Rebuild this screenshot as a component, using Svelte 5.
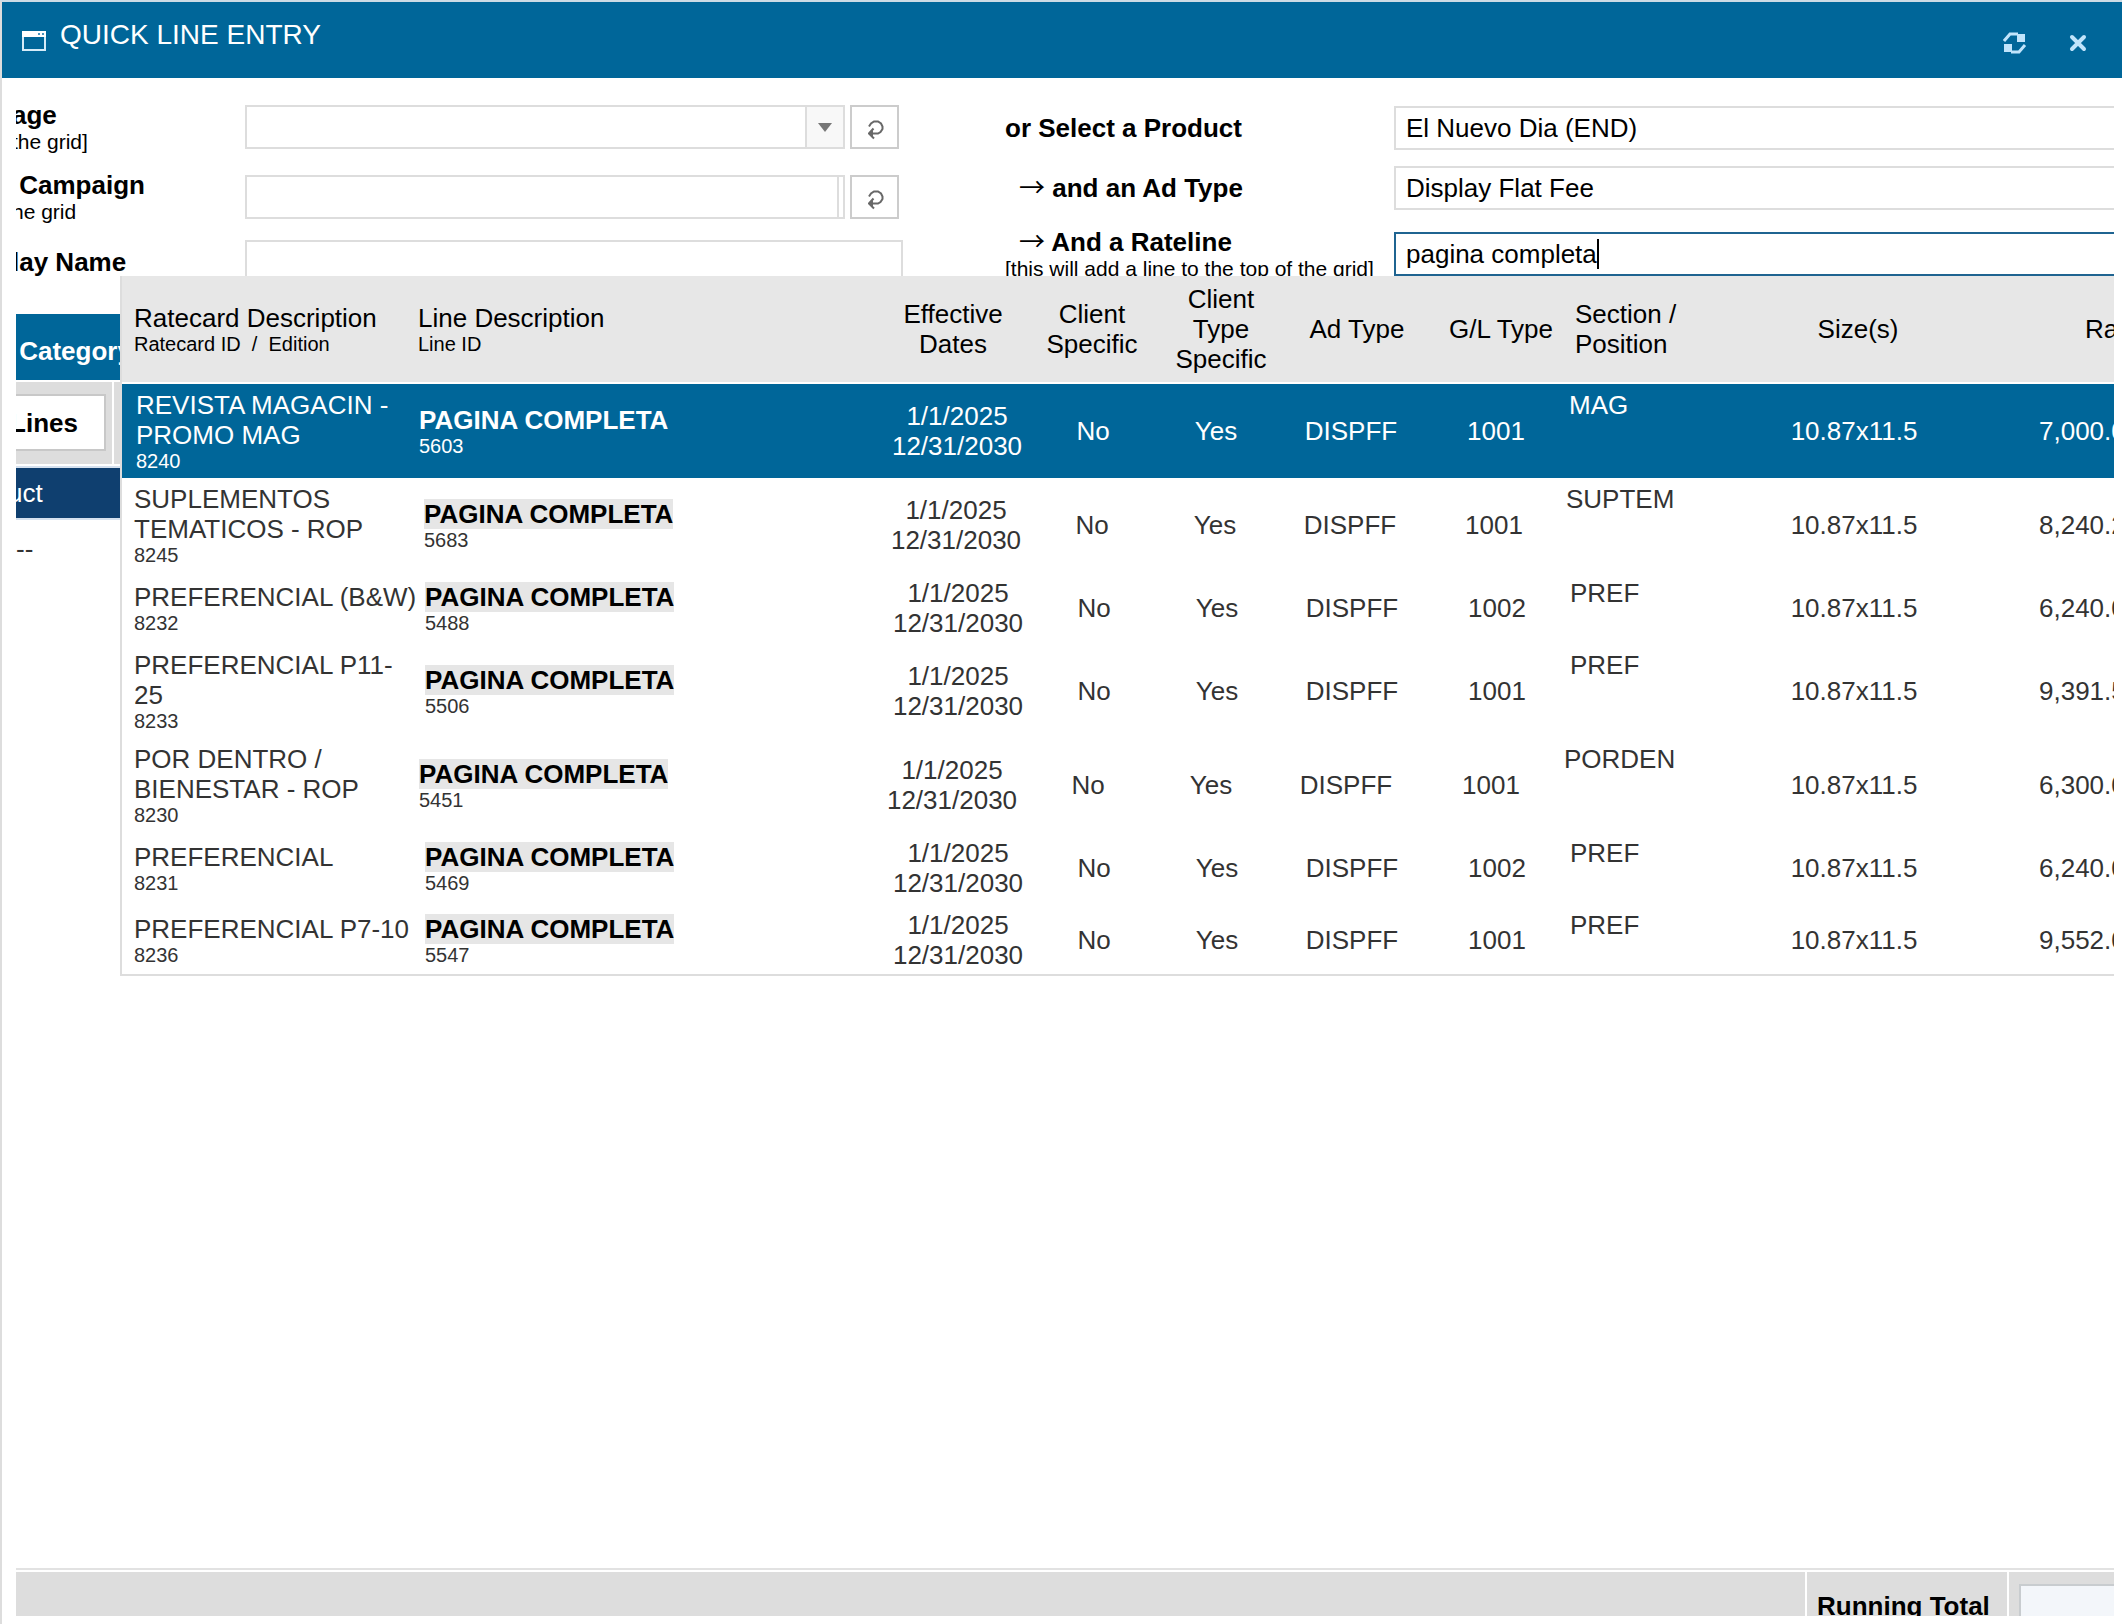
<script>
  const lines = [
    { name: 'REVISTA MAGACIN -\nPROMO MAG', card: '8240', id: '5603', gl: '1001', section: 'MAG', rate: '7,000.00', fit: 'selected' },
    { name: 'SUPLEMENTOS\nTEMATICOS - ROP', card: '8245', id: '5683', gl: '1001', section: 'SUPTEM', rate: '8,240.20', fit: 'snug' },
    { name: 'PREFERENCIAL (B&W)', card: '8232', id: '5488', gl: '1002', section: 'PREF', rate: '6,240.00', fit: '' },
    { name: 'PREFERENCIAL P11-\n25', card: '8233', id: '5506', gl: '1001', section: 'PREF', rate: '9,391.50', fit: '' },
    { name: 'POR DENTRO /\nBIENESTAR - ROP', card: '8230', id: '5451', gl: '1001', section: 'PORDEN', rate: '6,300.00', fit: 'tight' },
    { name: 'PREFERENCIAL', card: '8231', id: '5469', gl: '1002', section: 'PREF', rate: '6,240.00', fit: '' },
    { name: 'PREFERENCIAL P7-10', card: '8236', id: '5547', gl: '1001', section: 'PREF', rate: '9,552.00', fit: '' }
  ];
  let product = $state('El Nuevo Dia (END)');
  let adType = $state('Display Flat Fee');
  let rateline = $state('pagina completa');
</script>

{#snippet resetIcon()}
  <svg width="16" height="20" viewBox="0 0 16 20" fill="none" stroke="#686868" stroke-width="2" aria-hidden="true">
    <path d="M1 6.500L3 3.500L6 1.500H10L13 3.500L14.500 6.500V9L12.500 12L10 13.500H3" />
    <path d="M5.500 8.500L1 13.500L6 18.500" />
    <path d="M1 13.500L5 10.500V16.500Z" fill="#686868" stroke="none" />
  </svg>
{/snippet}

<div class="window">
  <header class="titlebar">
    <svg class="app-icon" width="24" height="20" viewBox="0 0 24 20" aria-hidden="true">
      <rect x="1" y="1" width="22" height="18" fill="none" stroke="#d5ebf8" stroke-width="2" />
      <rect width="24" height="6" fill="#fff" />
      <rect x="16" y="2" width="2" height="2" fill="#4a94bd" />
      <rect x="20" y="2" width="2" height="2" fill="#4a94bd" />
    </svg>
    <h1>QUICK LINE ENTRY</h1>
    <div class="tools">
      <button type="button" aria-label="Refresh">
        <svg width="24" height="22" viewBox="0 0 24 22" aria-hidden="true">
          <path d="M1 9L7 2H15" fill="none" stroke="#c0e4fb" stroke-width="3" />
          <rect x="14" y="2" width="8" height="8" fill="#c0e4fb" />
          <rect x="1" y="12" width="8" height="8" fill="#c0e4fb" />
          <path d="M8 20H16L22 13" fill="none" stroke="#c0e4fb" stroke-width="3" />
        </svg>
      </button>
      <button type="button" aria-label="Close">
        <svg width="18" height="18" viewBox="0 0 18 18" aria-hidden="true">
          <path d="M3 3L15 15M15 3L3 15" fill="none" stroke="#c0e4fb" stroke-width="4" stroke-linecap="round" />
        </svg>
      </button>
    </div>
  </header>

  <main>
    <form class="entry">
      <div class="column left">
        <div class="row">
          <label for="package">age<small>the grid]</small></label>
          <div class="control">
            <div class="box combo">
              <select id="package"><option></option></select>
              <span class="trigger"><svg width="14" height="9" viewBox="0 0 14 9" aria-hidden="true"><path d="M0 0H14L7 9Z" fill="#777" /></svg></span>
            </div>
            <button type="button" class="reset" aria-label="Reset package">{@render resetIcon()}</button>
          </div>
        </div>
        <div class="row">
          <label for="campaign">&nbsp;Campaign<small>he grid</small></label>
          <div class="control">
            <div class="box combo">
              <input id="campaign" type="text" />
              <span class="edge"></span>
            </div>
            <button type="button" class="reset" aria-label="Reset campaign">{@render resetIcon()}</button>
          </div>
        </div>
        <div class="row">
          <label for="display">lay Name</label>
          <input id="display" class="box" type="text" />
        </div>
      </div>

      <div class="column right">
        <div class="row">
          <label for="product">or Select a Product</label>
          <input id="product" class="box open" type="text" bind:value={product} />
        </div>
        <div class="row">
          <label for="adtype"><span class="arrow">→</span> and an Ad Type</label>
          <input id="adtype" class="box open" type="text" bind:value={adType} />
        </div>
        <div class="row double">
          <label for="rateline"><span class="arrow">→</span> And a Rateline<small>[this will add a line to the top of the grid]</small></label>
          <div class="box open active">
            <input id="rateline" type="text" bind:value={rateline} />
            <span class="caret"></span>
          </div>
        </div>
      </div>
    </form>

    <section class="grid">
      <div class="grid-head">&nbsp;Category</div>
      <div class="grid-tools">
        <div class="tool-cell"><button type="button">Lines</button></div>
        <div class="tool-cell"></div>
      </div>
      <div class="grid-group">uct</div>
      <div class="grid-item">--</div>
    </section>

    <footer>
      <div class="foot-cell fill"></div>
      <div class="foot-cell total"><label for="total">Running Total</label></div>
      <div class="foot-cell value"><input id="total" type="text" readonly /></div>
    </footer>

    <div class="picker">
      <table>
        <thead>
          <tr>
            <th class="start">Ratecard Description<small>Ratecard ID &nbsp;/&nbsp; Edition</small></th>
            <th class="start">Line Description<small>Line ID</small></th>
            <th>Effective<br />Dates</th>
            <th>Client<br />Specific</th>
            <th>Client<br />Type<br />Specific</th>
            <th>Ad Type</th>
            <th>G/L Type</th>
            <th class="start section">Section /<br />Position</th>
            <th>Size(s)</th>
            <th class="start rate">Rate</th>
          </tr>
        </thead>
        <tbody>
          {#each lines as line (line.card)}
            <tr class={line.fit}>
              <td class="start name">{line.name}<small>{line.card}</small></td>
              <td class="start"><mark>PAGINA COMPLETA</mark><small>{line.id}</small></td>
              <td>1/1/2025<br />12/31/2030</td>
              <td>No</td>
              <td>Yes</td>
              <td>DISPFF</td>
              <td>{line.gl}</td>
              <td class="start section">{line.section}</td>
              <td>10.87x11.5</td>
              <td class="start rate">{line.rate}</td>
            </tr>
          {/each}
        </tbody>
      </table>
    </div>
  </main>
</div>

<style>
  :global(body) {
    background: #fff;
  }
  .window,
  .window :is(input, select, button) {
    box-sizing: border-box;
    font-family: 'Liberation Sans', Arial, Helvetica, sans-serif;
    font-size: 26px;
    line-height: 30px;
    color: #000;
  }
  .window :is(div, header, main, footer, span) {
    box-sizing: border-box;
  }
  .window {
    display: flex;
    flex-direction: column;
    height: 100vh;
    border-top: 2px solid #ccdbe5;
    border-left: 2px solid #ddd;
  }
  button {
    padding: 0;
    cursor: pointer;
  }
  small {
    display: block;
    font-size: 21px;
    line-height: 24px;
    font-weight: 400;
  }

  .titlebar {
    display: flex;
    flex: none;
    height: 76px;
    padding: 0 35px 0 20px;
    background: #069;
  }
  .app-icon {
    margin-top: 29px;
  }
  h1 {
    flex: 1;
    margin: 17px 0 0 14px;
    font-size: 28px;
    line-height: 32px;
    font-weight: 400;
    color: #fff;
  }
  .tools {
    display: flex;
    align-items: center;
    gap: 42px;
    padding-top: 6px;
  }
  .tools button {
    display: flex;
    border: 0;
    background: none;
  }

  main {
    position: relative;
    display: flex;
    flex: 1;
    flex-direction: column;
    min-height: 0;
    margin: 0 8px 8px 14px;
    overflow: hidden;
  }

  .entry {
    display: flex;
    gap: 102px;
  }
  .column {
    display: flex;
    flex-direction: column;
    gap: 16px;
  }
  .left {
    flex: none;
    padding-top: 22px;
  }
  .right {
    flex: 1;
    padding-top: 28px;
  }
  .row {
    display: grid;
    align-items: center;
  }
  .left .row {
    grid-template-columns: 229px 658px;
  }
  .right .row {
    grid-template-columns: 389px 1fr;
  }
  .double {
    min-height: 56px;
  }
  label {
    font-weight: 700;
    white-space: nowrap;
  }
  .left label {
    margin-left: -4px;
  }
  .arrow {
    padding-left: 14px;
    font-family: 'Noto Sans CJK JP', 'Liberation Sans', sans-serif;
    font-weight: 400;
    line-height: 1;
  }
  .control {
    display: flex;
    gap: 5px;
  }
  .box {
    width: 100%;
    height: 44px;
    padding: 0 10px;
    border: 2px solid #ddd;
    border-radius: 0;
    background: #fff;
    outline: 0;
  }
  .combo {
    display: flex;
    width: 600px;
    padding: 0;
  }
  .combo :is(select, input) {
    flex: 1;
    min-width: 0;
    height: 40px;
    padding: 0 10px;
    border: 0;
    border-radius: 0;
    background: none;
    appearance: none;
    outline: 0;
  }
  .trigger {
    display: flex;
    align-items: center;
    justify-content: center;
    width: 38px;
    border-left: 2px solid #ddd;
    background: #f8f8f8;
  }
  .edge {
    width: 6px;
    border-left: 2px solid #ddd;
  }
  .reset {
    display: flex;
    align-items: center;
    justify-content: center;
    width: 49px;
    height: 44px;
    padding: 6px 0 0 2px;
    border: 2px solid #ccc;
    background: #fff;
  }
  .open {
    border-right: 0;
  }
  .active {
    display: flex;
    align-items: center;
    border-color: #1f6491;
  }
  .active input {
    field-sizing: content;
    padding: 0;
    border: 0;
    outline: 0;
    background: none;
  }
  .caret {
    width: 2px;
    height: 30px;
    background: #000;
  }

  .grid {
    flex: 1;
    padding-top: 30px;
  }
  .grid-head {
    height: 66px;
    padding-top: 22px;
    text-indent: -4px;
    background: #069;
    color: #fff;
    font-weight: 700;
  }
  .grid-tools {
    display: flex;
    gap: 2px;
    height: 88px;
    padding: 2px 0;
    border-bottom: 2px solid #d5e1ef;
  }
  .tool-cell {
    flex: 1;
    background: #ddd;
  }
  .tool-cell:first-child {
    flex: none;
    width: 96px;
    padding-top: 12px;
  }
  .tool-cell button {
    display: flex;
    align-items: center;
    justify-content: flex-end;
    width: 90px;
    height: 57px;
    padding-right: 26px;
    border: 2px solid #c8c8c8;
    border-left: 0;
    background: #fff;
    font-weight: 700;
  }
  .grid-group {
    height: 52px;
    padding-top: 10px;
    text-indent: -8px;
    border-bottom: 2px solid #d5e1ef;
    background: #0f3f6f;
    color: #fff;
  }
  .grid-item {
    padding-top: 14px;
    color: #333;
  }

  footer {
    display: flex;
    flex: none;
    gap: 2px;
    height: 48px;
    padding-top: 2px;
    border-top: 2px solid #e2e2e2;
    overflow: hidden;
  }
  .foot-cell {
    background: #ddd;
  }
  .fill {
    flex: 1;
  }
  .total {
    width: 200px;
    padding: 19px 0 0 10px;
  }
  .value {
    width: 105px;
    padding: 12px 0 0 10px;
  }
  .value input {
    width: 100%;
    height: 44px;
    border: 2px solid #c8cccf;
    border-right: 0;
    background: #f3f6fa;
  }

  .picker {
    position: absolute;
    top: 198px;
    left: 104px;
    right: 0;
    border: 2px solid #ddd;
    border-top: 0;
    border-right: 0;
    background: #fff;
    overflow: hidden;
  }
  table {
    display: block;
  }
  thead,
  tbody {
    display: block;
  }
  tr {
    display: grid;
    grid-template-columns: 303px 463px 140px 132px 114px 156px 134px 1fr 200px 160px;
    align-items: center;
    color: #333;
  }
  tbody tr {
    padding: 6px 0;
  }
  tbody tr:last-child {
    padding-bottom: 4px;
  }
  tr.snug {
    grid-template-columns: 302px 462px 140px 132px 114px 156px 132px 1fr 200px 160px;
  }
  tr.tight {
    grid-template-columns: 297px 463px 140px 132px 114px 156px 134px 1fr 200px 160px;
  }
  tr.selected {
    grid-template-columns: 297px 468px 140px 132px 114px 156px 134px 1fr 200px 160px;
    background: #069;
    color: #fff;
  }
  thead tr {
    grid-template-columns: 296px 465px 140px 138px 120px 152px 136px 1fr 200px 156px;
    height: 106px;
    margin-bottom: 2px;
    background: #e7e7e7;
    color: #000;
  }
  th,
  td {
    padding: 0;
    font-weight: 400;
    text-align: center;
    white-space: nowrap;
  }
  .picker small {
    font-size: 20px;
    line-height: 22px;
  }
  .picker .start {
    text-align: left;
  }
  .picker .start:first-child {
    padding-left: 12px;
  }
  .picker .selected .start:first-child {
    padding-left: 14px;
  }
  .name {
    white-space: pre-line;
  }
  .section {
    padding-left: 6px;
  }
  td.section {
    align-self: start;
  }
  td.rate {
    padding-left: 85px;
  }
  th.rate {
    padding-left: 127px;
  }
  mark {
    background: #e6e6e6;
    color: #000;
    font-weight: 700;
  }
  .selected mark {
    background: none;
    color: #fff;
  }
</style>
